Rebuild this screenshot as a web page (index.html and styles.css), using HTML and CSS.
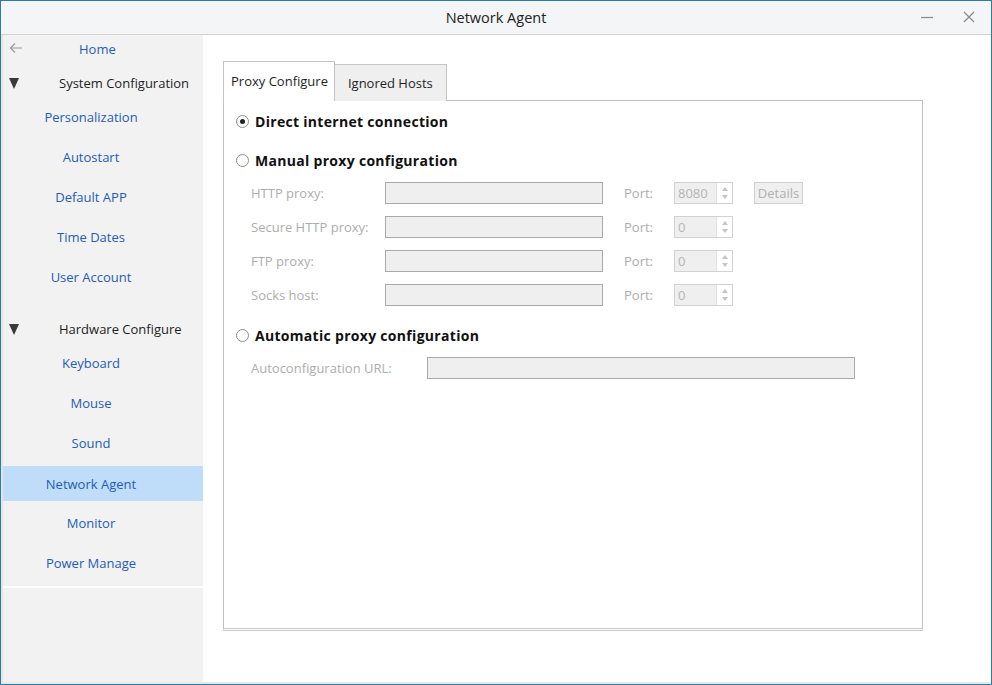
FILE: index.html
```html
<!DOCTYPE html>
<html>
<head>
<meta charset="utf-8">
<link rel="stylesheet" href="styles.css">
</head>
<body>
<div class="window">
  <div class="titlebar">
    <div class="title">Network Agent</div>
    <div class="controls">
      <svg class="ctl" width="14" height="14" viewBox="0 0 14 14"><path d="M1 7.5 H13" stroke="#8a8a8a" stroke-width="1.2"/></svg>
      <svg class="ctl" width="14" height="14" viewBox="0 0 14 14"><path d="M2 2 L12 12 M12 2 L2 12" stroke="#8a8a8a" stroke-width="1.2"/></svg>
    </div>
  </div>
  <div class="main">
    <div class="sidebar">
      <div class="home">
        <svg class="back" width="14" height="12" viewBox="0 0 14 12"><path d="M13 6 H2 M6 1.5 L1.5 6 L6 10.5" fill="none" stroke="#9a9a9a" stroke-width="1.2"/></svg>
        <span class="home-text">Home</span>
      </div>
      <div class="cat"><span class="tri"></span><span class="cat-text">System Configuration</span></div>
      <div class="item">Personalization</div>
      <div class="item">Autostart</div>
      <div class="item">Default APP</div>
      <div class="item">Time Dates</div>
      <div class="item">User Account</div>
      <div class="cat cat2"><span class="tri"></span><span class="cat-text">Hardware Configure</span></div>
      <div class="item">Keyboard</div>
      <div class="item">Mouse</div>
      <div class="item">Sound</div>
      <div class="item active">Network Agent</div>
      <div class="item">Monitor</div>
      <div class="item">Power Manage</div>
      <div class="sep"></div>
    </div>
    <div class="content">
      <div class="tabs">
        <div class="tab active">Proxy Configure</div>
        <div class="tab">Ignored Hosts</div>
      </div>
      <div class="panel">
        <div class="radio-row first"><span class="radio checked"></span><span class="rlabel">Direct internet connection</span></div>
        <div class="radio-row"><span class="radio"></span><span class="rlabel">Manual proxy configuration</span></div>
        <div class="frow">
          <span class="flabel">HTTP proxy:</span><span class="input host"></span>
          <span class="plabel">Port:</span><span class="spin"><span class="spin-val">8080</span><span class="arrows"><span class="up"></span><span class="down"></span></span></span>
          <span class="btn">Details</span>
        </div>
        <div class="frow">
          <span class="flabel">Secure HTTP proxy:</span><span class="input host"></span>
          <span class="plabel">Port:</span><span class="spin"><span class="spin-val">0</span><span class="arrows"><span class="up"></span><span class="down"></span></span></span>
        </div>
        <div class="frow">
          <span class="flabel">FTP proxy:</span><span class="input host"></span>
          <span class="plabel">Port:</span><span class="spin"><span class="spin-val">0</span><span class="arrows"><span class="up"></span><span class="down"></span></span></span>
        </div>
        <div class="frow">
          <span class="flabel">Socks host:</span><span class="input host"></span>
          <span class="plabel">Port:</span><span class="spin"><span class="spin-val">0</span><span class="arrows"><span class="up"></span><span class="down"></span></span></span>
        </div>
        <div class="radio-row auto"><span class="radio"></span><span class="rlabel">Automatic proxy configuration</span></div>
        <div class="frow urlrow">
          <span class="flabel wide">Autoconfiguration URL:</span><span class="input url"></span>
        </div>
      </div>
    </div>
  </div>
</div>
</body>
</html>
```
FILE: styles.css
```css
* { box-sizing: border-box; }
html, body { margin: 0; padding: 0; }
body {
  width: 992px; height: 685px; overflow: hidden;
  font-family: "Open Sans", "Noto Sans", sans-serif;
  font-size: 13px; color: #1e1e1e; background: #fff;
}
.window {
  width: 992px; height: 685px;
  border: 1px solid #2a7f9f;
  display: flex; flex-direction: column;
  background: #fff;
}
.titlebar {
  height: 34px; flex: none;
  background: #f4f5f7;
  border-bottom: 1px solid #d3d3d3;
  display: flex; align-items: center; justify-content: center;
  position: relative;
}
.title { font-size: 14.5px; color: #222; }
.controls {
  position: absolute; right: 15px; top: 9px;
  display: flex; gap: 28px;
}
.main { flex: 1; display: flex; border-left: 2px solid #e4e4e4; border-bottom: 2px solid #e8e8e8; }
.sidebar {
  width: 200px; flex: none; background: #f2f2f2;
  display: flex; flex-direction: column;
}
.home { height: 28px; display: flex; align-items: center; position: relative; }
.back { position: absolute; left: 6px; top: 7px; }
.home-text { color: #1f5cb6; margin-left: 76px; }
.cat { height: 40px; display: flex; align-items: center; }
.cat2 { margin-top: 12px; }
.tri {
  width: 0; height: 0; margin-left: 6px;
  border-left: 5.5px solid transparent; border-right: 5.5px solid transparent;
  border-top: 11px solid #3a3a3a;
}
.cat-text { margin-left: 40px; color: #1e1e1e; }
.item {
  height: 40px; display: flex; align-items: center; justify-content: center;
  color: #1f5cb6; padding-right: 24px;
}
.cat + .item { margin-top: -6px; }
.item.active { background: #bfdcf8; height: 35px; margin: 3px 0 2px; }
.sep { height: 0; border-top: 2px solid #fff; margin-top: 3px; }
.content { flex: 1; padding: 26px 0 0 20px; }
.tabs { display: flex; align-items: flex-end; height: 39px; }
.tab {
  height: 37px; padding: 0 13px; display: flex; align-items: center;
  background: #efefef; border: 1px solid #c6c6c6; border-bottom: none;
  margin-left: -1px; position: relative; top: 1px;
}
.tab.active {
  height: 40px; background: #fff; margin-left: 0; padding: 0 6px 2px 7px; top: 1px; z-index: 1;
  border-color: #c4c4c4;
}
.panel {
  width: 700px; height: 531px;
  border: 1px solid #c2c2c2; border-bottom: 3px double #c8c8c8;
  padding: 0 0 0 12px;
}
.radio-row { display: flex; align-items: center; height: 20px; }
.radio-row.first { margin-top: 10px; }
.radio-row + .radio-row { margin-top: 19px; }
.radio-row.auto { margin-top: 13px; }
.radio {
  width: 13px; height: 13px; border-radius: 50%;
  border: 1px solid #8f8f8f; background: #fff; position: relative;
}
.radio.checked::after {
  content: ""; position: absolute; left: 3px; top: 3px; width: 5px; height: 5px;
  border-radius: 50%; background: #222;
}
.rlabel { font-weight: 700; font-size: 14px; margin-left: 6px; color: #111; letter-spacing: 0.3px; }
.frow { display: flex; align-items: center; height: 34px; color: #adadad; }
.radio-row + .frow { margin-top: 6px; }
.flabel { width: 134px; margin-left: 15px; }
.flabel.wide { width: 176px; }
.input { height: 22px; background: #efefef; border: 1px solid #a9a9a9; }
.host { width: 218px; }
.url { width: 428px; }
.plabel { margin-left: 21px; width: 50px; }
.spin {
  width: 59px; height: 22px; display: flex;
  border: 1px solid #d2d2d2; background: #fff;
}
.spin-val { flex: 1; background: #efefef; padding-left: 3px; display: flex; align-items: center; color: #b5b5b5; border-right: 1px solid #e0e0e0; }
.arrows { width: 15px; display: flex; flex-direction: column; align-items: center; justify-content: center; gap: 4px; }
.up { width: 0; height: 0; border-left: 3px solid transparent; border-right: 3px solid transparent; border-bottom: 4px solid #c4c4c4; }
.down { width: 0; height: 0; border-left: 3px solid transparent; border-right: 3px solid transparent; border-top: 4px solid #c4c4c4; }
.btn {
  margin-left: 21px; height: 22px; width: 49px; display: flex; align-items: center; justify-content: center;
  border: 1px solid #d0d0d0; background: #efefef; color: #b0b0b0;
}
.urlrow { height: 32px; }
.radio-row.auto + .frow { margin-top: 7px; }
```
